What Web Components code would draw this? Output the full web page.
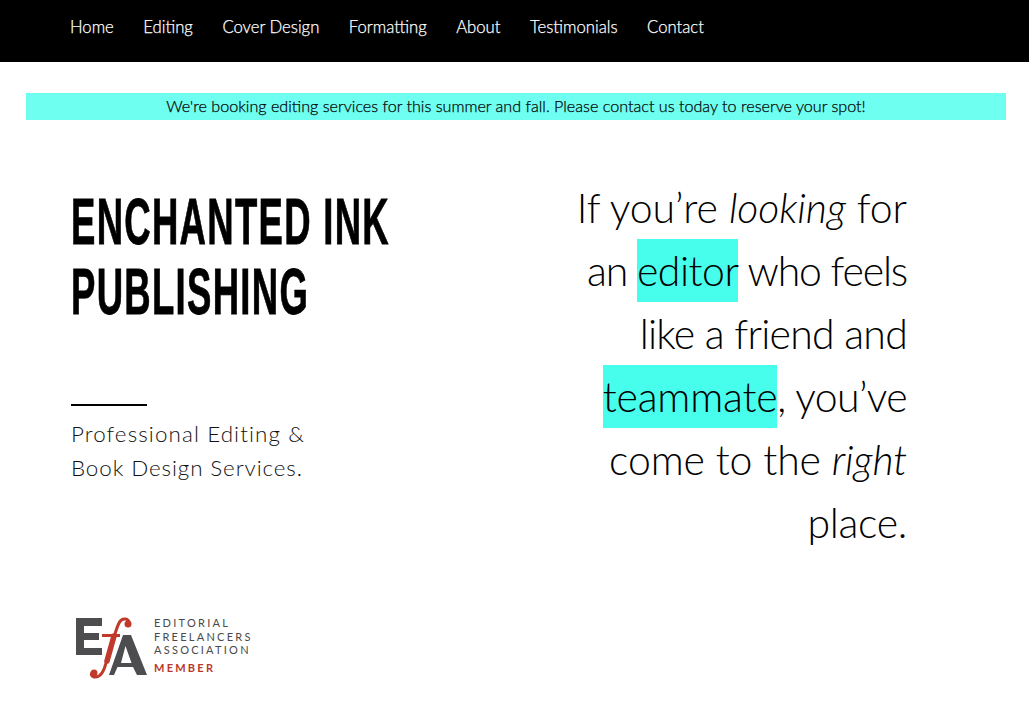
<!DOCTYPE html>
<html>
<head>
<meta charset="utf-8">
<title>Enchanted Ink Publishing</title>
<style>
    html, body { margin: 0; background: #fff; }
    body { font-family: "Lato", "Liberation Sans", sans-serif; color: #000; height: 715px; overflow: hidden; }
</style>
</head>
<body>
<site-nav>
    <a href="#">Home</a>
    <a href="#">Editing</a>
    <a href="#">Cover Design</a>
    <a href="#">Formatting</a>
    <a href="#">About</a>
    <a href="#">Testimonials</a>
    <a href="#">Contact</a>
</site-nav>
<notice-bar>We're booking editing services for this summer and fall. Please contact us today to reserve your spot!</notice-bar>
<hero-section>
    <brand-block slot="left"></brand-block>
    <efa-badge slot="left"></efa-badge>
    <hero-quote slot="right"></hero-quote>
</hero-section>

<script>
// top black navigation
class SiteNav extends HTMLElement {
    constructor() {
        super();
        this.attachShadow({ mode: 'open' });
        this.shadowRoot.innerHTML = `
        <style>
            :host {
                display: flex;
                align-items: center;
                gap: 29.5px;
                height: 62px;
                padding: 0 0 9px 70px;
                box-sizing: border-box;
                background: #000;
            }
            ::slotted(a) {
                color: #fff;
                font-size: 16.7px;
                font-weight: 300;
                -webkit-text-stroke: 0.25px #fff;
                text-decoration: none;
            }
        </style>
        <slot></slot>
        `;
    }
}

// cyan announcement strip
class NoticeBar extends HTMLElement {
    constructor() {
        super();
        this.attachShadow({ mode: 'open' });
        this.shadowRoot.innerHTML = `
        <style>
            :host {
                display: block;
                margin: 31px 23px 0 26px;
                height: 27px;
                line-height: 26px;
                background: #6ffff0;
                text-align: center;
                font-size: 16.15px;
                font-weight: 300;
                -webkit-text-stroke: 0.25px #000;
                color: #0a0a0a;
                white-space: nowrap;
            }
        </style>
        <slot></slot>
        `;
    }
}

// two column main area
class HeroSection extends HTMLElement {
    constructor() {
        super();
        this.attachShadow({ mode: 'open' });
        this.shadowRoot.innerHTML = `
        <style>
            :host {
                display: flex;
                justify-content: space-between;
                padding: 0 122px 0 71px;
            }
            .left { display: flex; flex-direction: column; }
        </style>
        <div class="left"><slot name="left"></slot></div>
        <div class="right"><slot name="right"></slot></div>
        `;
    }
}

class BrandBlock extends HTMLElement {
    constructor() {
        super();
        this.attachShadow({ mode: 'open' });
        this.shadowRoot.innerHTML = `
        <style>
            :host { display: block; padding-top: 67px; }
            /* no condensed face is installed, so squeeze the bold one */
            h1 {
                margin: 0;
                width: 320px;
                font-family: "Liberation Sans", sans-serif;
                font-size: 64px;
                font-weight: 700;
                line-height: 70px;
                letter-spacing: 2.3px;
                white-space: nowrap;
                transform: scaleX(0.57);
                transform-origin: left top;
                -webkit-text-stroke: 0.8px #000;
            }
            hr {
                width: 76px;
                height: 2px;
                margin: 77px 0 0;
                border: 0;
                background: #000;
            }
            p {
                margin: 11px 0 0;
                font-size: 22.4px;
                font-weight: 300;
                line-height: 34px;
                letter-spacing: 1.1px;
                color: #111;
            }
            p span { letter-spacing: 0.9px; }
        </style>
        <h1>ENCHANTED INK<br>PUBLISHING</h1>
        <hr>
        <p>Professional Editing &amp;<br><span>Book Design Services.</span></p>
        `;
    }
}

// Editorial Freelancers Association member logo
class EfaBadge extends HTMLElement {
    constructor() {
        super();
        this.attachShadow({ mode: 'open' });
        this.shadowRoot.innerHTML = `
        <style>
            :host { display: flex; margin: 132px 0 0 5px; gap: 6px; }
            svg { width: 72px; height: 63px; display: block; flex: none; }
            .names { margin-top: -1px; font-family: "Lato", sans-serif; font-size: 11px; line-height: 13.500px; letter-spacing: 2.250px; color: #4a4a4a; font-weight: 400; }
            .member { color: #b8392a; font-weight: 700; margin-top: 4px; }
        </style>
        <svg viewBox="0 0 72 63">
            <path fill="#4d4d4f" d="M0 1H26V9H8V16H23V23H8V31H26V38H0Z"/>
            <path fill="#4d4d4f" fill-rule="evenodd" d="M47 18H55L71 58H61L57 50H41.500L38 58H33ZM45 46H55.500L49.500 29Z"/>
            <path fill="none" stroke="#c0392b" stroke-width="3" stroke-linecap="round" d="M53.500 7C53 1 46 0 43 6C40 12 38 20 36 28L30 46C28 54 24 61 18 60C15 59 15 57 16 56"/>
            <path fill="none" stroke="#c0392b" stroke-width="5.500" stroke-linecap="round" d="M38 19L31 44"/>
            <circle cx="52" cy="7" r="3.500" fill="#c0392b"/>
            <circle cx="18" cy="56" r="3.500" fill="#c0392b"/>
            <path fill="#c0392b" d="M26 17H44V20H26Z"/>
        </svg>
        <div class="names">
            <div>EDITORIAL</div>
            <div>FREELANCERS</div>
            <div>ASSOCIATION</div>
            <div class="member">MEMBER</div>
        </div>
        `;
    }
}

class HeroQuote extends HTMLElement {
    constructor() {
        super();
        this.attachShadow({ mode: 'open' });
        this.shadowRoot.innerHTML = `
        <style>
            :host {
                display: block;
                padding-top: 56px;
                text-align: right;
                font-size: 41px;
                font-weight: 300;
                line-height: 63px;
                white-space: nowrap;
            }
            mark { background: #47fdeb; color: inherit; display: inline-block; }
            /* per line tracking, the original typeface runs narrower on some words */
            .a { letter-spacing: -0.1px; }
            .b { letter-spacing: -1.2px; }
            .c { letter-spacing: -0.75px; }
            .d { letter-spacing: -0.6px; }
            .e { letter-spacing: -0.15px; }
            .f { letter-spacing: -0.3px; }
            .m1 { letter-spacing: -0.5px; }
            .m2 { letter-spacing: -0.2px; }
        </style>
        <span class="a">If you’re <i>looking</i> for</span><br>
        <span class="b">an <mark class="m1">editor</mark> who feels</span><br>
        <span class="c">like a friend and</span><br>
        <span class="d"><mark class="m2">teammate</mark>, you’ve</span><br>
        <span class="e">come to the <i>right</i></span><br>
        <span class="f">place.</span>
        `;
    }
}

customElements.define('site-nav', SiteNav);
customElements.define('notice-bar', NoticeBar);
customElements.define('hero-section', HeroSection);
customElements.define('brand-block', BrandBlock);
customElements.define('efa-badge', EfaBadge);
customElements.define('hero-quote', HeroQuote);
</script>
</body>
</html>
